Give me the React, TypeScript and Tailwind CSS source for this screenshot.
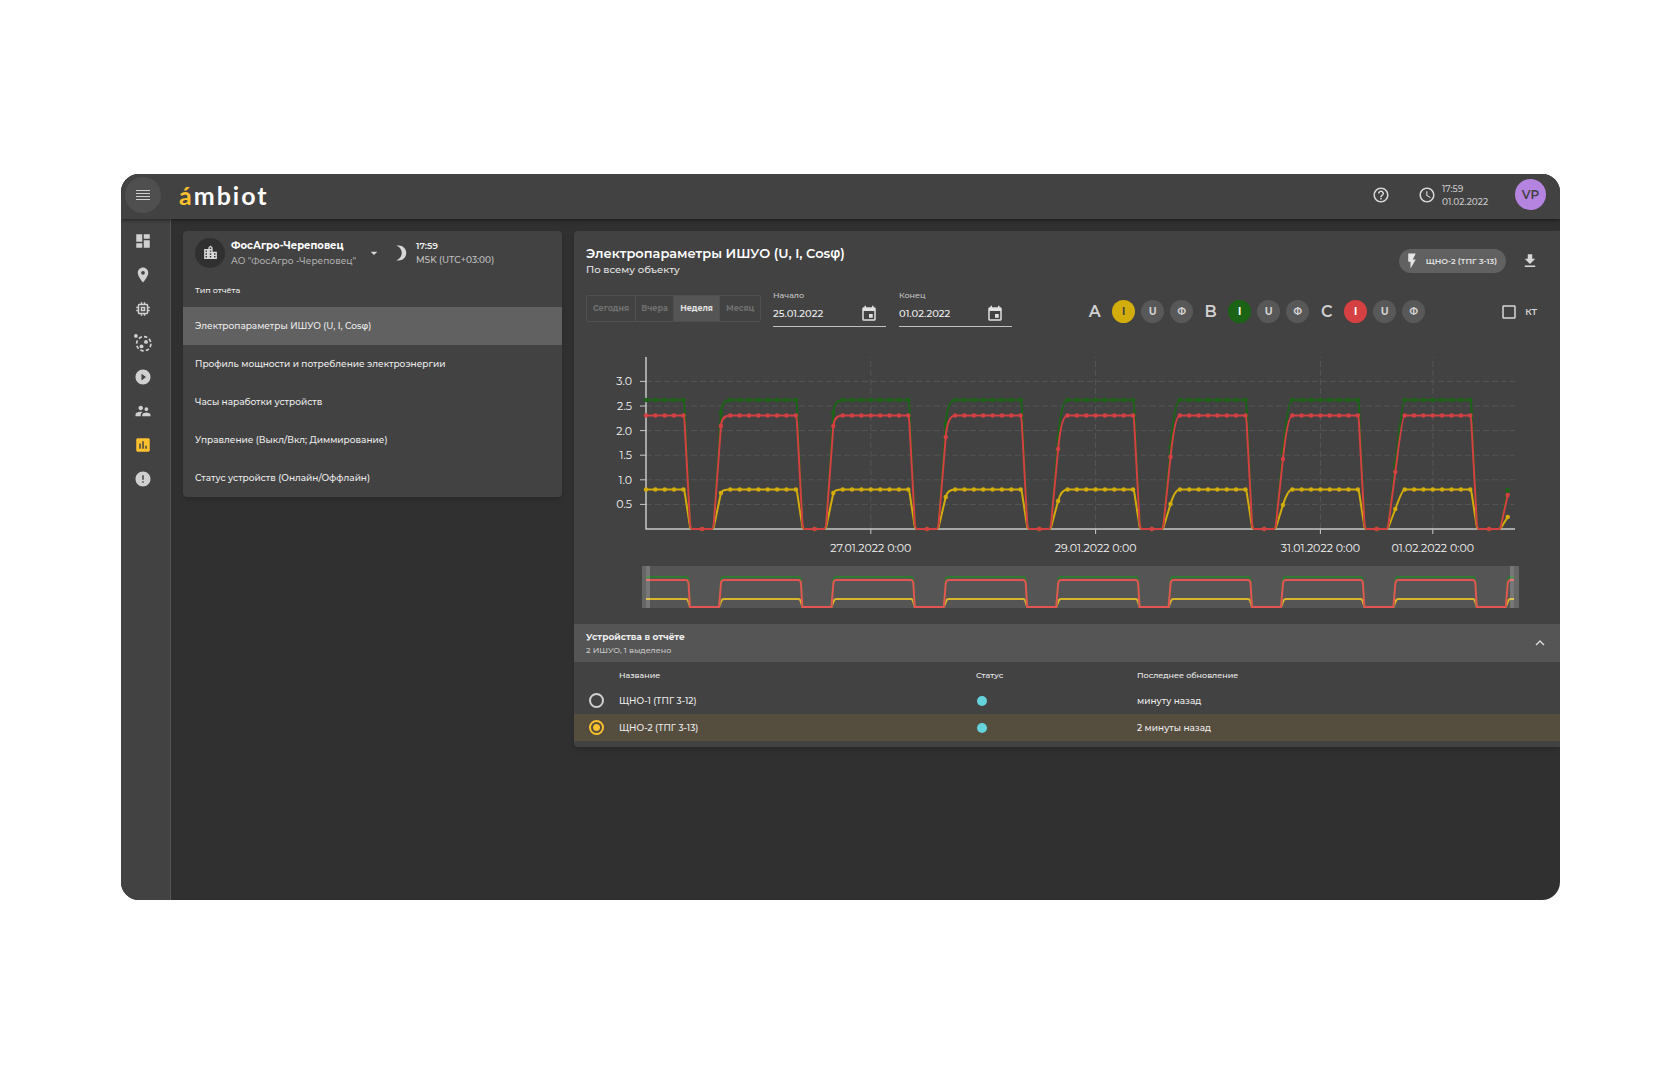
import { useState } from "react";
import type { ComponentType } from "react";
import {
  MdAccessTime,
  MdArrowDropDown,
  MdAssessment,
  MdBrightness3,
  MdCheckBoxOutlineBlank,
  MdDashboard,
  MdError,
  MdEvent,
  MdFileDownload,
  MdFlashOn,
  MdHelpOutline,
  MdKeyboardArrowUp,
  MdLocationCity,
  MdMemory,
  MdPlace,
  MdPlayCircleFilled,
  MdSupervisorAccount,
} from "react-icons/md";

type IconProps = { className?: string };

const OrbitIcon = ({ className }: IconProps) => (
  <svg viewBox="0 0 24 24" className={className} fill="currentColor" aria-hidden="true">
    <circle
      cx="13"
      cy="13"
      r="9.5"
      fill="none"
      stroke="currentColor"
      strokeWidth="2.2"
      strokeDasharray="4.6 2.86"
    />
    <circle cx="2.5" cy="2.5" r="2.5" />
    <circle cx="16" cy="10.5" r="2.6" />
    <circle cx="10" cy="16.5" r="2.6" />
  </svg>
);

const MenuIcon = ({ className }: IconProps) => (
  <svg viewBox="0 0 14 12" className={className} stroke="currentColor" aria-hidden="true">
    <path d="M0 1.5h14M0 4.5h14M0 7.5h14M0 10.5h14" />
  </svg>
);

const navItems: { label: string; icon: ComponentType<IconProps> }[] = [
  { label: "Панель", icon: MdDashboard },
  { label: "Карта", icon: MdPlace },
  { label: "Устройства", icon: MdMemory },
  { label: "Группы", icon: OrbitIcon },
  { label: "Сценарии", icon: MdPlayCircleFilled },
  { label: "Пользователи", icon: MdSupervisorAccount },
  { label: "Отчёты", icon: MdAssessment },
  { label: "События", icon: MdError },
];

const reports = [
  "Электропараметры ИШУО (U, I, Cosφ)",
  "Профиль мощности и потребление электроэнергии",
  "Часы наработки устройств",
  "Управление (Выкл/Вкл; Диммирование)",
  "Статус устройств (Онлайн/Оффлайн)",
];

const periods = [
  { label: "Сегодня", width: "w-[49px]" },
  { label: "Вчера", width: "w-[38px]" },
  { label: "Неделя", width: "w-[46px]" },
  { label: "Месяц", width: "w-[40px]" },
];

const phases = [
  { name: "A", active: "bg-[#d3ad0c] text-[#424242]" },
  { name: "B", active: "bg-[#1b6416] text-white" },
  { name: "C", active: "bg-[#d54042] text-white" },
];

const devices = [
  { name: "ЩНО-1 (ТПГ 3-12)", updated: "минуту назад" },
  { name: "ЩНО-2 (ТПГ 3-13)", updated: "2 минуты назад" },
];

// Chart geometry, in viewBox units
const X0 = 72;
const Y0 = 185;
const DAY = 112.4;
const STEP = DAY / 12;

type Series = { color: string; top: number; starts: number[]; last: number };

// top and starts are heights above the zero line, starts is the first reading of each evening
const series: Series[] = [
  { color: "#d3ad0c", top: 39.5, starts: [36, 36, 32, 28, 25, 24, 20], last: 12 },
  { color: "#1b6416", top: 129, starts: [116, 116, 105, 91, 82, 78, 65], last: 39 },
  { color: "#d54042", top: 113.5, starts: [103, 103, 92, 80, 72, 70, 57], last: 34 },
];

const linePath = ({ top, starts, last }: Series) => {
  const ty = Y0 - top;
  let d = `M${X0} ${ty}`;
  for (let i = 0; i < 8; i++) {
    const drop = X0 + (i * 12 + 4) * STEP;
    const rise = drop + 3 * STEP;
    const height = i < 7 ? starts[i] : last;
    const xp = rise + STEP;
    const yp = Y0 - height;
    d += `L${drop} ${ty}Q${drop + 1} ${ty} ${drop + 1.5} ${ty + top * 0.12}`;
    d += `L${drop + 6.5} ${Y0 - top * 0.06}Q${drop + 7} ${Y0} ${drop + 9} ${Y0}`;
    d += `L${rise} ${Y0}Q${rise + 2} ${Y0} ${rise + 2.6} ${Y0 - height * 0.1}L${xp} ${yp}`;
    if (i < 7) {
      const slope = (height * 0.9) / (STEP - 2.6);
      const cx = xp + Math.min((top - height) / slope, 7);
      d += `Q${cx} ${ty} ${xp + STEP} ${ty}`;
    }
  }
  return d;
};

const linePoints = ({ top, starts, last }: Series) => {
  const points: [number, number][] = [];
  for (let k = 0; k <= 92; k++) {
    const phase = k % 12;
    const day = Math.floor(k / 12);
    let height = top;
    if (phase >= 5 && phase <= 7) height = 0;
    if (phase === 8) height = day < 7 ? starts[day] : last;
    if (height === 0 && phase !== 6) continue;
    points.push([X0 + k * STEP, Y0 - height]);
  }
  return points;
};

const previewPath = (y: number) => {
  let d = `M${X0} ${y}`;
  for (let i = 0; i < 8; i++) {
    const x = X0 + i * DAY;
    d += `L${x + 40} ${y}Q${x + 42} ${y} ${x + 42.5} ${y + 3}L${x + 44} 263`;
    d += `L${x + 73} 263L${x + 75} ${y + 3}Q${x + 75.5} ${y} ${x + 78} ${y}`;
  }
  return `${d}L${X0 + 868} ${y}`;
};

const yTicks = ["0.5", "1.0", "1.5", "2.0", "2.5", "3.0"];
const xTicks = [
  { day: 2, label: "27.01.2022 0:00" },
  { day: 4, label: "29.01.2022 0:00" },
  { day: 6, label: "31.01.2022 0:00" },
  { day: 7, label: "01.02.2022 0:00" },
];

const Chart = () => (
  <svg viewBox="0 0 986 280" className="block h-auto w-full" role="img" aria-label="График">
    <g stroke="#555555" strokeDasharray="6 3">
      {yTicks.map((tick) => {
        const y = Y0 - Number(tick) * 49.2;
        return <path key={tick} d={`M${X0} ${y}H941`} />;
      })}
      {xTicks.map(({ day }) => (
        <path key={day} d={`M${X0 + day * DAY} ${Y0}V13`} />
      ))}
    </g>
    <g stroke="#c8c8c8">
      {yTicks.map((tick) => {
        const y = Y0 - Number(tick) * 49.2;
        return <path key={tick} d={`M66 ${y}H${X0}`} />;
      })}
      {xTicks.map(({ day }) => (
        <path key={day} d={`M${X0 + day * DAY} ${Y0}v5`} />
      ))}
      <path d={`M${X0} 13V${Y0}H941`} fill="none" strokeWidth="1.5" />
    </g>
    <g fill="#f5f5f5" fontSize="11">
      {yTicks.map((tick) => (
        <text key={tick} x="58" y={Y0 + 4 - Number(tick) * 49.2} textAnchor="end">
          {tick}
        </text>
      ))}
      {xTicks.map(({ day, label }) => (
        <text key={day} x={X0 + day * DAY} y="208" textAnchor="middle">
          {label}
        </text>
      ))}
    </g>
    {series.map((item) => (
      <g key={item.color} fill={item.color}>
        <path d={linePath(item)} fill="none" stroke={item.color} strokeWidth="2" />
        {linePoints(item).map(([x, y]) => (
          <circle key={x} cx={x} cy={y} r="2.2" />
        ))}
      </g>
    ))}
    <rect x="68" y="222" width="877" height="42" fill="#555555" />
    <g fill="none" strokeWidth="2">
      <path d={previewPath(255)} stroke="#d9b52c" />
      <path d={previewPath(233)} stroke="#2f7a31" />
      <path d={previewPath(236)} stroke="#e35552" />
    </g>
    <g fill="#ffffff">
      <rect x="68" y="222" width="4" height="42" opacity="0.1" />
      <rect x="72" y="222" width="4" height="42" opacity="0.2" />
      <rect x="936" y="222" width="4" height="42" opacity="0.2" />
      <rect x="940" y="222" width="5" height="42" opacity="0.1" />
    </g>
  </svg>
);

const DateField = ({ id, label, value }: { id: string; label: string; value: string }) => (
  <div className="w-[113px] border-b border-[#c0c0c0]">
    <label htmlFor={id} className="block text-[8px] leading-3 font-medium text-[#c8c8c8]">
      {label}
    </label>
    <div className="flex h-[25px] items-center justify-between pr-2">
      <input
        id={id}
        defaultValue={value}
        className="w-20 bg-transparent text-[10px] font-medium text-[#eeeeee] outline-none"
      />
      <button type="button" aria-label={`${label}: календарь`}>
        <MdEvent className="size-[18px] text-[#e0e0e0]" />
      </button>
    </div>
  </div>
);

const Header = () => (
  <header className="z-10 flex h-[45px] shrink-0 items-center bg-[#424242] pr-[14px] pb-1 pl-1 shadow-[0_1px_4px_rgba(0,0,0,0.5)]">
    <button
      type="button"
      aria-label="Меню"
      className="flex size-9 items-center justify-center rounded-full bg-[#4f4f4f]"
    >
      <MenuIcon className="h-3 w-[14px] text-[#d0d0d0]" />
    </button>
    <a
      href="#"
      className="ml-[18px] font-[Lato] text-[25px] leading-8 font-bold tracking-[2px] text-white"
    >
      <span className="text-[#fbc02d]">á</span>mbiot
    </a>
    <div className="ml-auto flex items-center">
      <button type="button" aria-label="Помощь">
        <MdHelpOutline className="size-[18px]" />
      </button>
      <MdAccessTime className="ml-7 size-[18px]" />
      <div className="ml-[6px] w-[73px] text-[9px] leading-[13px] font-medium text-[#c8c8c8]">
        <div>17:59</div>
        <div>01.02.2022</div>
      </div>
      <button
        type="button"
        className="flex size-[31px] items-center justify-center rounded-full bg-[#b583e0] text-xs font-semibold text-[#424242]"
      >
        VP
      </button>
    </div>
  </header>
);

const Sidebar = () => (
  <nav className="flex w-[50px] shrink-0 flex-col gap-4 border-r border-[#555555] bg-[#424242] pt-[13px] pl-[13px]">
    {navItems.map((item) => (
      <a
        key={item.label}
        href="#"
        aria-label={item.label}
        className={item.label === "Отчёты" ? "text-[#fbc02d]" : "text-[#d0d0d0]"}
      >
        <item.icon className="size-[18px]" />
      </a>
    ))}
  </nav>
);

const ReportsCard = () => {
  const [selected, setSelected] = useState(0);

  return (
    <section className="w-[379px] shrink-0 overflow-hidden rounded-sm bg-[#424242] shadow-md">
      <div className="flex h-[43px] items-center pl-3">
        <div className="flex size-[30px] items-center justify-center rounded-full bg-[#303030]">
          <MdLocationCity className="size-[17px]" />
        </div>
        <div className="ml-[6px] w-[125px] whitespace-nowrap">
          <div className="text-[10px] leading-[15px] font-bold text-white">ФосАгро-Череповец</div>
          <div className="text-[9px] leading-[15px] font-medium text-[#b0b0b0]">
            АО "ФосАгро -Череповец"
          </div>
        </div>
        <button type="button" aria-label="Выбрать объект" className="ml-[10px]">
          <MdArrowDropDown className="size-4" />
        </button>
        <MdBrightness3 className="ml-[10px] size-[18px]" />
        <div className="ml-[6px] text-[9px] leading-[14px] font-medium text-[#c0c0c0]">
          <div className="font-semibold text-[#eeeeee]">17:59</div>
          <div>MSK (UTC+03:00)</div>
        </div>
      </div>
      <h2 className="mb-[2px] flex h-[31px] items-center pl-3 text-[8px] font-medium text-[#eeeeee]">
        Тип отчёта
      </h2>
      <ul>
        {reports.map((report, index) => (
          <li key={report}>
            <button
              type="button"
              onClick={() => setSelected(index)}
              className={`flex h-[38px] w-full items-center pl-3 text-[9px] font-medium text-[#eeeeee] ${
                selected === index ? "bg-[#616161]" : ""
              }`}
            >
              {report}
            </button>
          </li>
        ))}
      </ul>
    </section>
  );
};

const Toolbar = () => (
  <div className="flex items-center pr-[23px] pl-3">
    <div className="flex h-[27px] rounded-xs border border-[#505050]">
      {periods.map(({ label, width }) => (
        <button
          key={label}
          type="button"
          className={`${width} border-r border-[#505050] text-[8px] font-bold last:border-r-0 ${
            label === "Неделя" ? "bg-[#555555] text-[#e0e0e0]" : "text-[#707070]"
          }`}
        >
          {label}
        </button>
      ))}
    </div>
    <div className="ml-3 flex gap-[13px]">
      <DateField id="date-start" label="Начало" value="25.01.2022" />
      <DateField id="date-end" label="Конец" value="01.02.2022" />
    </div>
    <div className="ml-auto flex items-center gap-[6px] pt-[7px]">
      {phases.map((phase) => (
        <div key={phase.name} className="flex items-center gap-[6px]">
          <span className="w-[23px] text-center text-base leading-5 font-semibold text-[#d0d0d0]">
            {phase.name}
          </span>
          {["I", "U", "Φ"].map((param) => (
            <button
              key={param}
              type="button"
              className={`size-[23px] rounded-full text-[10px] font-bold ${
                param === "I" ? phase.active : "bg-[#585858] text-[#d0d0d0]"
              }`}
            >
              {param}
            </button>
          ))}
        </div>
      ))}
    </div>
    <label className="ml-[75px] flex items-center gap-[7px] pt-[7px] text-[9px] font-semibold text-[#d8d8d8]">
      <span className="grid">
        <input type="checkbox" className="col-start-1 row-start-1 appearance-none" />
        <MdCheckBoxOutlineBlank className="col-start-1 row-start-1 size-[18px]" />
      </span>
      КТ
    </label>
  </div>
);

const DevicesTable = () => {
  const [selected, setSelected] = useState(1);

  return (
    <>
      <div className="flex h-[38px] items-center justify-between bg-[#555555] pr-[11px] pl-3">
        <div>
          <h2 className="text-[9px] leading-[14px] font-bold text-[#eeeeee]">
            Устройства в отчёте
          </h2>
          <p className="text-[8px] leading-3 font-medium text-[#c8c8c8]">2 ИШУО, 1 выделено</p>
        </div>
        <button type="button" aria-label="Свернуть">
          <MdKeyboardArrowUp className="size-[18px]" />
        </button>
      </div>
      <table className="w-full table-fixed text-left text-[9px] font-medium text-[#eeeeee]">
        <thead>
          <tr className="h-[25px] text-[8px]">
            <th className="w-[45px]" aria-label="Выбор" />
            <th className="w-[357px] font-medium">Название</th>
            <th className="w-[161px] font-medium">Статус</th>
            <th className="font-medium">Последнее обновление</th>
          </tr>
        </thead>
        <tbody>
          {devices.map((device, index) => (
            <tr
              key={device.name}
              className={selected === index ? "h-[27px] bg-[#554d3e]" : "h-[27px]"}
            >
              <td className="pl-[15px]">
                <input
                  type="radio"
                  name="device"
                  id={`device-${index}`}
                  checked={selected === index}
                  onChange={() => setSelected(index)}
                  className="block size-[15px] appearance-none rounded-full border-2 border-[#d0d0d0] checked:border-[#fbc02d] checked:bg-[radial-gradient(circle,#fbc02d_3px,transparent_4px)]"
                />
              </td>
              <td>
                <label htmlFor={`device-${index}`}>{device.name}</label>
              </td>
              <td>
                <div className="ml-px size-[10px] rounded-full bg-[#65d3dc]" />
              </td>
              <td>{device.updated}</td>
            </tr>
          ))}
        </tbody>
      </table>
    </>
  );
};

const ChartCard = () => (
  <section className="min-w-0 flex-1 rounded-l-sm bg-[#424242] pb-[6px] shadow-md">
    <div className="flex items-center pt-[13px] pr-[21px] pl-3">
      <div>
        <h1 className="text-[13px] leading-[18px] font-semibold text-white">
          Электропараметры ИШУО (U, I, Cosφ)
        </h1>
        <p className="text-[10px] leading-4 font-medium text-[#e6e6e6]">По всему объекту</p>
      </div>
      <div className="ml-auto flex h-6 items-center gap-[5px] rounded-full bg-[#616161] pr-[9px] pl-1 text-[8px] font-semibold text-[#e6e6e6]">
        <MdFlashOn className="size-[18px]" />
        ЩНО-2 (ТПГ 3-13)
      </div>
      <button type="button" aria-label="Скачать" className="ml-[15px]">
        <MdFileDownload className="size-[18px]" />
      </button>
    </div>
    <div className="pt-[11px] pb-[17px]">
      <Toolbar />
    </div>
    <Chart />
    <DevicesTable />
  </section>
);

export default function App() {
  return (
    <div className="flex min-h-screen bg-white pt-[174px] pr-[120px] pb-[174px] pl-[121px] font-[Montserrat,Inter,sans-serif] text-[#d8d8d8]">
      <div className="flex min-w-0 flex-1 flex-col overflow-hidden rounded-[18px] bg-[#303030]">
        <Header />
        <div className="flex flex-1">
          <Sidebar />
          <main className="flex min-w-0 flex-1 items-start gap-3 pt-3 pl-3">
            <ReportsCard />
            <ChartCard />
          </main>
        </div>
      </div>
    </div>
  );
}
